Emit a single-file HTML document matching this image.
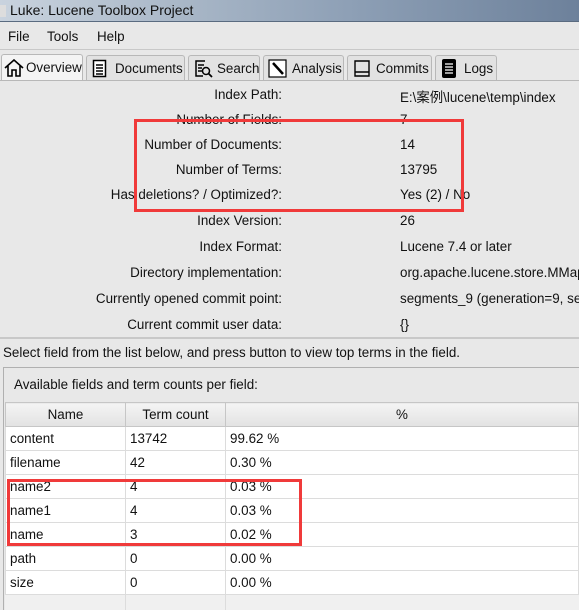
<!DOCTYPE html>
<html><head><meta charset="utf-8"><style>
*{margin:0;padding:0;box-sizing:border-box}
html,body{overflow:hidden}
body{width:579px;height:610px;background:#e8e8e8;font-family:"Liberation Sans","Noto Sans CJK SC",sans-serif;font-size:13.4px;color:#111;position:relative}
.abs{position:absolute;white-space:nowrap}
.title{left:0;top:0;width:579px;height:22px;background:linear-gradient(90deg,#c9d3de 0%,#aab8c8 30%,#8ea0b6 60%,#6d819b 100%);border-bottom:1px solid #5a6b80}
.menu{left:0;top:22px;width:579px;height:28px;background:#e8e8e8;border-bottom:1px solid #c8c8c8}
.tab{position:absolute;top:55px;height:25px;background:#e2e2e2;border:1px solid #b8b8b8;border-bottom:none;border-radius:3px 3px 0 0}
.tab.sel{background:#f4f4f4;top:54px;height:26px}
.tab span{position:absolute;top:5px}
.lab{right:297px;text-align:right}
.val{left:400px}
.red{position:absolute;border:3px solid #f03a3a}
table{position:absolute;left:5px;top:402px;border-collapse:collapse;width:574px;table-layout:fixed}
td{height:24px;border:1px solid #dcdcdc;padding-left:4px;background:#fff;overflow:hidden}
th{height:24px;font-weight:normal;background:linear-gradient(#f4f4f4,#e2e2e2);border:1px solid #c6c6c6}
</style></head><body>
<div class="abs title"><div style="position:absolute;left:0;top:5px;width:6px;height:12px;background:#ddd"></div><span style="position:absolute;left:10px;top:2px;font-size:14px">Luke: Lucene Toolbox Project</span></div>
<div class="abs menu"><span class="abs" style="left:8px;top:7px">File</span><span class="abs" style="left:47px;top:7px">Tools</span><span class="abs" style="left:97px;top:7px">Help</span></div>
<div style="position:absolute;left:0;top:80px;width:579px;height:1px;background:#b8b8b8"></div>
<div class="tab sel" style="left:1px;width:82px"><svg style="position:absolute;left:2px;top:4px" width="20" height="18" viewBox="0 0 20 18"><path d="M1 9 L10 1 L19 9 M4 7 V17 H8 V11 H12 V17 H16 V7" fill="none" stroke="#000" stroke-width="1.6"/></svg><span style="left:24px">Overview</span></div>
<div class="tab" style="left:86px;width:99px"><svg style="position:absolute;left:5px;top:3px" width="16" height="19"><rect x="1.5" y="1.5" width="12" height="16" fill="#fff" stroke="#000" stroke-width="1.5"/><path d="M4 6h7M4 9h7M4 12h7M4 15h7" stroke="#000" stroke-width="1.4"/></svg><span style="left:28px">Documents</span></div>
<div class="tab" style="left:188px;width:72px"><svg style="position:absolute;left:5px;top:3px" width="20" height="20"><path d="M11 2H2V17H9M4 6h6M4 9h4M4 12h4" fill="none" stroke="#000" stroke-width="1.5"/><circle cx="12" cy="12" r="3.5" fill="none" stroke="#000" stroke-width="1.5"/><path d="M14.5 14.5L18 18" stroke="#000" stroke-width="1.8"/></svg><span style="left:28px">Search</span></div>
<div class="tab" style="left:263px;width:81px"><svg style="position:absolute;left:4px;top:3px" width="20" height="20"><rect x="1" y="1" width="17" height="17" fill="#fff" stroke="#000" stroke-width="1.2"/><path d="M5 4L15 15" stroke="#000" stroke-width="2.5"/></svg><span style="left:28px">Analysis</span></div>
<div class="tab" style="left:347px;width:85px"><svg style="position:absolute;left:4px;top:3px" width="20" height="20"><path d="M3 2H17V17H3Z M3 13H17" fill="none" stroke="#000" stroke-width="1.4"/></svg><span style="left:28px">Commits</span></div>
<div class="tab" style="left:435px;width:62px"><svg style="position:absolute;left:5px;top:2px" width="16" height="21"><rect x="1" y="1" width="14" height="19" rx="2" fill="#000"/><path d="M4 6h8M4 9h8M4 12h8M4 15h8" stroke="#fff" stroke-width="1.3"/></svg><span style="left:28px">Logs</span></div>

<span class="abs lab" style="top:87px">Index Path:</span><span class="abs val" style="top:86px">E:\案例\lucene\temp\index</span>
<span class="abs lab" style="top:112px">Number of Fields:</span><span class="abs val" style="top:112px">7</span>
<span class="abs lab" style="top:137px">Number of Documents:</span><span class="abs val" style="top:137px">14</span>
<span class="abs lab" style="top:162px">Number of Terms:</span><span class="abs val" style="top:162px">13795</span>
<span class="abs lab" style="top:187px">Has deletions? / Optimized?:</span><span class="abs val" style="top:187px">Yes (2) / No</span>
<span class="abs lab" style="top:213px">Index Version:</span><span class="abs val" style="top:213px">26</span>
<span class="abs lab" style="top:239px">Index Format:</span><span class="abs val" style="top:239px">Lucene 7.4 or later</span>
<span class="abs lab" style="top:265px">Directory implementation:</span><span class="abs val" style="top:265px">org.apache.lucene.store.MMap</span>
<span class="abs lab" style="top:291px">Currently opened commit point:</span><span class="abs val" style="top:291px">segments_9 (generation=9, seg</span>
<span class="abs lab" style="top:317px">Current commit user data:</span><span class="abs val" style="top:317px">{}</span>
<div class="red" style="left:134px;top:119px;width:330px;height:93px"></div>

<div style="position:absolute;left:0;top:337px;width:579px;height:2px;background:#c8c8c8"></div>
<span class="abs" style="left:3px;top:345px">Select field from the list below, and press button to view top terms in the field.</span>
<div style="position:absolute;left:3px;top:367px;width:576px;height:243px;border:1px solid #b0b0b0;border-right:none;border-bottom:none;background:#e8e8e8"></div>
<span class="abs" style="left:14px;top:377px">Available fields and term counts per field:</span>
<div style="position:absolute;left:5px;top:402px;width:574px;height:208px;background:#f0f0f0"></div>
<table>
<tr><th style="width:120px">Name</th><th style="width:100px">Term count</th><th>%</th></tr>
<tr><td>content</td><td>13742</td><td>99.62 %</td></tr>
<tr><td>filename</td><td>42</td><td>0.30 %</td></tr>
<tr><td>name2</td><td>4</td><td>0.03 %</td></tr>
<tr><td>name1</td><td>4</td><td>0.03 %</td></tr>
<tr><td>name</td><td>3</td><td>0.02 %</td></tr>
<tr><td>path</td><td>0</td><td>0.00 %</td></tr>
<tr><td>size</td><td>0</td><td>0.00 %</td></tr>
</table>
<div style="position:absolute;left:125px;top:594px;width:1px;height:16px;background:#dcdcdc"></div>
<div style="position:absolute;left:225px;top:594px;width:1px;height:16px;background:#dcdcdc"></div>
<div class="red" style="left:7px;top:479px;width:295px;height:67px"></div>
</body></html>
